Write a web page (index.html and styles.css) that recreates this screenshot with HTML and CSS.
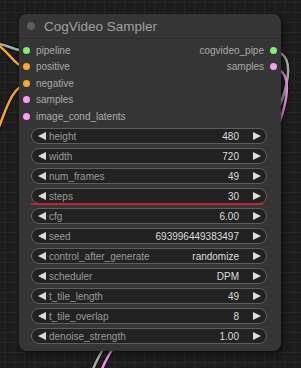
FILE: index.html
```html
<!DOCTYPE html>
<html lang="en">
<head>
  <meta charset="UTF-8" />
  <title>CogVideo Sampler</title>
  <link rel="stylesheet" href="styles.css">
</head>
<body>
  <svg class="links" width="301" height="368" viewBox="0 0 301 368">
    <g fill="none" stroke-linecap="round">
      <path class="shadow" d="M -10 42 C 8 44, 14 51, 27 51" />
      <path class="shadow" d="M -6 42 C 8 50, 14 66, 27 68" />
      <path class="shadow" d="M -3 132 C 6 110, 12 86, 27 84" />
      <path class="shadow" d="M 273 51 C 300 52, 290 100, 250 160 S 110 320, 92 372" />
      <path class="shadow" d="M 273 68 C 296 70, 290 110, 258 170 S 118 320, 101 372" />
      <path stroke="#9fb39f" d="M -10 42 C 8 44, 14 51, 27 51" />
      <path stroke="#f9a42c" d="M -6 42 C 8 50, 14 66, 27 68" />
      <path stroke="#f9a42c" d="M -3 132 C 6 110, 12 86, 27 84" />
      <path stroke="#9fb39f" d="M 273 51 C 300 52, 290 100, 250 160 S 110 320, 92 372" />
      <path stroke="#f58cf0" d="M 273 68 C 296 70, 290 110, 258 170 S 118 320, 101 372" />
    </g>
  </svg>

  <div class="node">
    <div class="node-title">
      <span class="title-dot"></span>
      <span>CogVideo Sampler</span>
    </div>

    <div class="slots">
      <ul class="inputs">
        <li><i class="dot green"></i>pipeline</li>
        <li><i class="dot orange"></i>positive</li>
        <li><i class="dot orange"></i>negative</li>
        <li><i class="dot pink"></i>samples</li>
        <li><i class="dot pink"></i>image_cond_latents</li>
      </ul>
      <ul class="outputs">
        <li>cogvideo_pipe<i class="dot green"></i></li>
        <li>samples<i class="dot pink"></i></li>
      </ul>
    </div>

    <div class="widgets">
      <div class="widget"><span class="arrow left"></span><span class="label">height</span><span class="value">480</span><span class="arrow right"></span></div>
      <div class="widget"><span class="arrow left"></span><span class="label">width</span><span class="value">720</span><span class="arrow right"></span></div>
      <div class="widget"><span class="arrow left"></span><span class="label">num_frames</span><span class="value">49</span><span class="arrow right"></span></div>
      <div class="widget progress"><span class="arrow left"></span><span class="label">steps</span><span class="value">30</span><span class="arrow right"></span></div>
      <div class="widget"><span class="arrow left"></span><span class="label">cfg</span><span class="value">6.00</span><span class="arrow right"></span></div>
      <div class="widget"><span class="arrow left"></span><span class="label">seed</span><span class="value">693996449383497</span><span class="arrow right"></span></div>
      <div class="widget"><span class="arrow left"></span><span class="label">control_after_generate</span><span class="value">randomize</span><span class="arrow right"></span></div>
      <div class="widget"><span class="arrow left"></span><span class="label">scheduler</span><span class="value">DPM</span><span class="arrow right"></span></div>
      <div class="widget"><span class="arrow left"></span><span class="label">t_tile_length</span><span class="value">49</span><span class="arrow right"></span></div>
      <div class="widget"><span class="arrow left"></span><span class="label">t_tile_overlap</span><span class="value">8</span><span class="arrow right"></span></div>
      <div class="widget"><span class="arrow left"></span><span class="label">denoise_strength</span><span class="value">1.00</span><span class="arrow right"></span></div>
    </div>
  </div>
</body>
</html>
```

FILE: styles.css
```css
html, body {
  margin: 0;
  padding: 0;
  height: 100%;
  overflow: hidden;
}

body {
  position: relative;
  background-color: #1c1c1c;
  background-image:
    linear-gradient(to right, #252525 1px, transparent 1px),
    linear-gradient(to bottom, #252525 1px, transparent 1px);
  background-size: 10px 10px;
  background-position: 4px 2px;
  font-family: 'Liberation Sans', Arial, sans-serif;
}

.links {
  position: absolute;
  top: 0;
  left: 0;
  z-index: 0;
}

.links .shadow {
  stroke: rgba(0, 0, 0, 0.6);
  stroke-width: 4.5;
}

.links path {
  stroke-width: 2.5;
}

.node {
  position: absolute;
  top: 14px;
  left: 19px;
  width: 262px;
  height: 337px;
  background: #353535;
  border-radius: 8px;
  box-shadow: 2px 2px 6px rgba(0, 0, 0, 0.6);
  z-index: 1;
  box-sizing: border-box;
}

.node-title {
  height: 25px;
  display: flex;
  align-items: center;
  gap: 9px;
  padding-left: 8px;
  color: #a0a0a0;
  font-size: 13.5px;
  border-bottom: 1px solid #2e2e2e;
  box-sizing: border-box;
}

.title-dot {
  width: 8px;
  height: 8px;
  border-radius: 50%;
  background: #5c5c5c;
}

.slots {
  display: flex;
  justify-content: space-between;
  padding-top: 3px;
  height: 86px;
}

.slots ul {
  list-style: none;
  margin: 0;
  padding: 0;
}

.slots li {
  height: 16.5px;
  display: flex;
  align-items: center;
  font-size: 10px;
  color: #aaaaaa;
}

.inputs li {
  padding-left: 4px;
  gap: 6px;
}

.outputs li {
  justify-content: flex-end;
  padding-right: 4px;
  gap: 6px;
}

.dot {
  width: 7px;
  height: 7px;
  border-radius: 50%;
  display: inline-block;
}

.dot.green { background: #7cf56c; }
.dot.orange { background: #fba932; }
.dot.pink { background: #f99cf3; }

.widgets {
  display: flex;
  flex-direction: column;
  gap: 4px;
  padding: 0 14px 0 12px;
}

.widget {
  position: relative;
  height: 16px;
  display: flex;
  align-items: center;
  background: #222222;
  border: 1px solid #5e5e5e;
  border-radius: 9px;
  box-sizing: border-box;
  font-size: 10px;
  padding: 0 5px 0 6px;
}

.widget .label {
  color: #9a9a9a;
  margin-left: 3px;
  flex: 1;
  white-space: nowrap;
}

.widget .value {
  color: #dddddd;
  margin-right: 14px;
  white-space: nowrap;
}

.arrow {
  width: 0;
  height: 0;
  border-top: 4px solid transparent;
  border-bottom: 4px solid transparent;
}

.arrow.left {
  border-right: 8px solid #dddddd;
}

.arrow.right {
  border-left: 8px solid #dddddd;
}

.widget.progress::after {
  content: "";
  position: absolute;
  left: -1px;
  right: 3px;
  bottom: -2px;
  height: 2px;
  background: #c32336;
}
```
